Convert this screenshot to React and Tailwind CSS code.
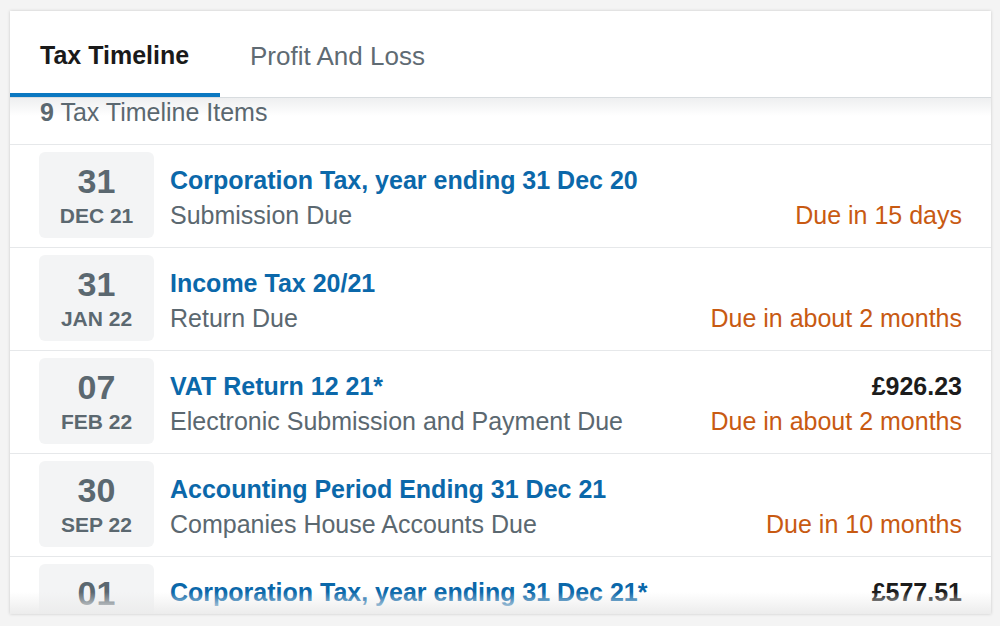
import React from 'react';

const items = [
  { day: '31', month: 'DEC 21', title: 'Corporation Tax, year ending 31 Dec 20', subtitle: 'Submission Due', due: 'Due in 15 days' },
  { day: '31', month: 'JAN 22', title: 'Income Tax 20/21', subtitle: 'Return Due', due: 'Due in about 2 months' },
  { day: '07', month: 'FEB 22', title: 'VAT Return 12 21*', subtitle: 'Electronic Submission and Payment Due', amount: '£926.23', due: 'Due in about 2 months' },
  { day: '30', month: 'SEP 22', title: 'Accounting Period Ending 31 Dec 21', subtitle: 'Companies House Accounts Due', due: 'Due in 10 months' },
  { day: '01', month: 'DEC 22', title: 'Corporation Tax, year ending 31 Dec 21*', subtitle: 'Payment Due', amount: '£577.51', due: 'Due in 12 months' },
];

function DateBox({ day, month }) {
  return (
    <div className="flex h-[86px] w-[115px] shrink-0 flex-col items-center justify-center rounded-md bg-[#f3f4f5] pt-[6px] font-bold text-[#5b6870]">
      <div className="text-[34px] leading-[36px]">{day}</div>
      <div className="text-[21px] leading-[34px]">{month}</div>
    </div>
  );
}

function TimelineRow({ item }) {
  return (
    <div className="flex h-[103px] shrink-0 items-start border-b border-[#e6e8ea] pl-[29px] pr-[29px] pt-[7px]">
      <DateBox day={item.day} month={item.month} />
      <div className="flex flex-1 items-start pl-[16px] pt-[11px]">
        <div className="flex-1">
          <div className="text-[25px] font-bold leading-[35px] text-[#0b68aa]">{item.title}</div>
          <div className="text-[25px] leading-[35px] text-[#5b6870]">{item.subtitle}</div>
        </div>
        <div className="text-right">
          <div className="h-[35px] text-[25px] font-bold leading-[35px] text-[#1c1c1c]">{item.amount}</div>
          <div className="text-[25px] leading-[35px] text-[#c85a12]">{item.due}</div>
        </div>
      </div>
    </div>
  );
}

export default function App() {
  return (
    <div className="h-[626px] overflow-hidden bg-[#f4f4f4] pl-[10px] pr-[9px] pt-[11px] font-['Liberation_Sans',Arial,sans-serif]">
      <div className="relative flex h-[603px] flex-col overflow-hidden bg-white shadow-[0_0_3px_rgba(0,0,0,0.18)]">
        <div className="flex h-[87px] shrink-0 border-b border-[#d8dcdf]">
          <div className="flex w-[210px] flex-col">
            <div className="flex flex-1 items-center pl-[30px] pt-[8px] text-[25px] font-bold text-[#1a1a1a]">Tax Timeline</div>
            <div className="h-[4px] bg-[#0b78c1]"></div>
          </div>
          <div className="flex items-center pb-[4px] pl-[30px] pt-[8px] text-[26px] text-[#5f6b73]">Profit And Loss</div>
        </div>
        <div className="relative flex h-[47px] shrink-0 items-center border-b border-[#e6e8ea] pb-[16px] pl-[30px] text-[25px] text-[#5b6870]">
          <div className="pointer-events-none absolute inset-x-0 top-0 h-[18px] bg-gradient-to-b from-[#eeeff0] to-white"></div>
          <span className="relative">
            <span className="font-bold">9</span> Tax Timeline Items
          </span>
        </div>
        {items.map((item, i) => (
          <TimelineRow key={i} item={item} />
        ))}
        <div className="pointer-events-none absolute inset-x-0 bottom-0 h-[22px] bg-gradient-to-b from-white/0 to-[#ececec]"></div>
      </div>
    </div>
  );
}
